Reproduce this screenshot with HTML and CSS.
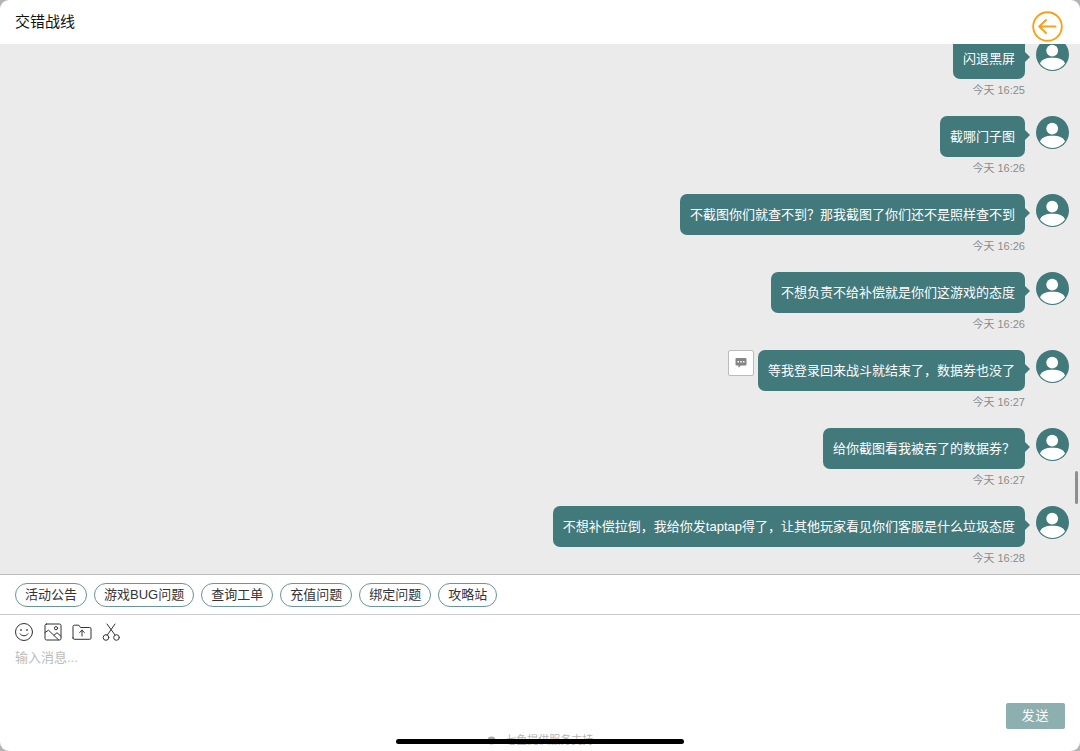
FILE: index.html
```html
<!DOCTYPE html>
<html lang="zh-CN">
<head>
<meta charset="utf-8">
<meta name="viewport" content="width=device-width, initial-scale=1">
<title>交错战线</title>
<link rel="stylesheet" href="styles.css">
</head>
<body>
<svg class="sprite" aria-hidden="true">
  <symbol id="avatar" viewBox="0 0 33 33">
    <circle cx="16.5" cy="16.5" r="16.5" fill="#42797b"/>
    <circle cx="16.2" cy="12.6" r="5.9" fill="#fff"/>
    <path d="M4 25.500C5 21.800 10 19.800 16.500 19.800S28 21.800 29 25.500A15.300 15.300 0 0 1 4 25.500Z" fill="#fff"/>
  </symbol>
</svg>
<div class="app">
  <header class="header">
    <h1 class="title">交错战线</h1>
    <button class="back" type="button" aria-label="返回">
      <svg width="31" height="31" viewBox="0 0 31 31" fill="none" stroke="#f5a21b" stroke-width="1.900" stroke-linecap="round" stroke-linejoin="round"><circle cx="15.500" cy="15.500" r="14.300"/><path d="M23.500 15.500H7.500M14 9 7.200 15.500 14 22"/></svg>
    </button>
  </header>

  <main class="chat">
    <article class="message">
      <div class="body"><p class="bubble">闪退黑屏</p><time class="time">今天 16:25</time></div>
      <svg class="avatar"><use href="#avatar"/></svg>
    </article>
    <article class="message">
      <div class="body"><p class="bubble">截哪门子图</p><time class="time">今天 16:26</time></div>
      <svg class="avatar"><use href="#avatar"/></svg>
    </article>
    <article class="message">
      <div class="body"><p class="bubble">不截图你们就查不到？那我截图了你们还不是照样查不到</p><time class="time">今天 16:26</time></div>
      <svg class="avatar"><use href="#avatar"/></svg>
    </article>
    <article class="message">
      <div class="body"><p class="bubble">不想负责不给补偿就是你们这游戏的态度</p><time class="time">今天 16:26</time></div>
      <svg class="avatar"><use href="#avatar"/></svg>
    </article>
    <article class="message">
      <button class="quote" type="button" aria-label="引用">
        <svg width="12" height="12" viewBox="0 0 12 12"><path d="M1.500 1h9a1 1 0 0 1 1 1v5.500a1 1 0 0 1-1 1H6L3.500 10.800V8.500h-2a1 1 0 0 1-1-1V2a1 1 0 0 1 1-1Z" fill="#858585"/><path d="M2.500 4h1.500v1.500H2.500zM5.300 4h1.500v1.500H5.300zM8 4h1.500v1.500H8z" fill="#fff"/></svg>
      </button>
      <div class="body"><p class="bubble">等我登录回来战斗就结束了，数据券也没了</p><time class="time">今天 16:27</time></div>
      <svg class="avatar"><use href="#avatar"/></svg>
    </article>
    <article class="message">
      <div class="body"><p class="bubble">给你截图看我被吞了的数据券？</p><time class="time">今天 16:27</time></div>
      <svg class="avatar"><use href="#avatar"/></svg>
    </article>
    <article class="message">
      <div class="body"><p class="bubble">不想补偿拉倒，我给你发taptap得了，让其他玩家看见你们客服是什么垃圾态度</p><time class="time">今天 16:28</time></div>
      <svg class="avatar"><use href="#avatar"/></svg>
    </article>
    <span class="scroll-thumb"></span>
  </main>

  <nav class="shortcuts">
    <button class="chip" type="button">活动公告</button>
    <button class="chip" type="button">游戏BUG问题</button>
    <button class="chip" type="button">查询工单</button>
    <button class="chip" type="button">充值问题</button>
    <button class="chip" type="button">绑定问题</button>
    <button class="chip" type="button">攻略站</button>
  </nav>

  <form class="composer">
    <div class="tools">
      <button class="tool" type="button" aria-label="表情">
        <svg class="tool-icon" viewBox="0 0 20 20"><circle cx="10" cy="10" r="8.500"/><path d="M6 11.800c1.800 2.700 6.200 2.700 8 0"/><path d="M7 7.800v.4M13 7.800v.4" stroke-width="1.500"/></svg>
      </button>
      <button class="tool" type="button" aria-label="图片">
        <svg class="tool-icon" viewBox="0 0 20 20"><rect x="2" y="2" width="16" height="16" rx="1.500"/><circle cx="13" cy="6.200" r="1.600"/><path d="M2 10.500 5.500 8.200l10 9.600M11 13.300l3-2.600 4 3.600"/></svg>
      </button>
      <button class="tool" type="button" aria-label="文件">
        <svg class="tool-icon" viewBox="0 0 20 20"><path d="M1 16V4.500A1.300 1.300 0 0 1 2.300 3.200h4.500L8.500 5.500h9.200A1.300 1.300 0 0 1 19 6.800V16a1.300 1.300 0 0 1-1.300 1.300H2.300A1.300 1.300 0 0 1 1 16ZM10 14V8.200M7.600 10.500 10 8.200l2.400 2.300"/></svg>
      </button>
      <button class="tool" type="button" aria-label="截图">
        <svg class="tool-icon" viewBox="0 0 20 20"><circle cx="5" cy="15.500" r="2.800"/><circle cx="15.500" cy="15.500" r="2.800"/><path d="M6.300 13 14 2M14 13 6 2"/></svg>
      </button>
    </div>
    <textarea class="input" aria-label="输入消息" placeholder="输入消息..."></textarea>
    <button class="send" type="submit">发送</button>
    <footer class="support"><svg width="9" height="9" viewBox="0 0 9 9"><circle cx="4.500" cy="4.500" r="4" fill="#aaa"/></svg>· 七鱼提供服务支持</footer>
  </form>
  <div class="home-bar"></div>
</div>
</body>
</html>
```
FILE: styles.css
```css
* {
  box-sizing: border-box;
}

body {
  margin: 0;
  background: #b4b4b4;
  font-family: "Liberation Sans", "Noto Sans CJK SC", sans-serif;
  font-size: 13px;
  line-height: 20px;
  color: #333;
}

button {
  margin: 0;
  padding: 0;
  border: 0;
  background: none;
  font: inherit;
  color: inherit;
}

svg {
  display: block;
}

.sprite {
  position: absolute;
  width: 0;
  height: 0;
}

.app {
  position: relative;
  display: flex;
  flex-direction: column;
  height: 100vh;
  overflow: hidden;
  border-radius: 9px;
  background: #fff;
}

.header {
  display: flex;
  align-items: center;
  flex: none;
  height: 44px;
  padding: 0 15px;
}

.title {
  margin: 0;
  font-size: 15px;
  font-weight: 400;
  color: #111;
}

.back {
  position: absolute;
  top: 11px;
  right: 17px;
  z-index: 1;
}

.chat {
  position: relative;
  display: flex;
  flex: 1;
  flex-direction: column;
  justify-content: flex-end;
  gap: 12px;
  min-height: 0;
  padding: 0 11px 2px;
  overflow: hidden;
  background: #ebebeb;
}

.message {
  display: flex;
  flex: none;
  align-items: flex-start;
  justify-content: flex-end;
}

.body {
  display: flex;
  flex-direction: column;
  align-items: flex-end;
  margin-right: 11px;
}

.bubble {
  position: relative;
  margin: 0;
  padding: 11px 10px 10px;
  border-radius: 7px;
  background: #42797b;
  color: #fff;
}

.bubble::after {
  content: "";
  position: absolute;
  top: 14px;
  left: 100%;
  border: 5px solid transparent;
  border-right-width: 0;
  border-left-color: #42797b;
}

.time {
  height: 25px;
  padding-top: 1px;
  font-size: 11px;
  color: #8c8c8c;
}

.avatar {
  flex: none;
  width: 33px;
  height: 33px;
}

.quote {
  display: grid;
  place-items: center;
  width: 26px;
  height: 26px;
  margin-right: 4px;
  border: 1px solid #bbb;
  border-radius: 2px;
  background: #fff;
}

.scroll-thumb {
  position: absolute;
  right: 2px;
  bottom: 70px;
  width: 3px;
  height: 33px;
  border-radius: 2px;
  background: #8e8e8e;
}

.shortcuts {
  display: flex;
  flex: none;
  gap: 7px;
  padding: 8px 15px 7px;
  border-top: 1px solid #bdbdbd;
  border-bottom: 1px solid #ccc;
}

.chip {
  height: 24px;
  padding: 0 9px;
  border: 1px solid #6a9495;
  border-radius: 12px;
  line-height: 22px;
}

.composer {
  display: flex;
  flex: none;
  flex-direction: column;
  padding: 7px 15px 0;
}

.tools {
  display: flex;
  gap: 9px;
  margin-left: -1px;
}

.tool-icon {
  width: 20px;
  height: 20px;
  fill: none;
  stroke: #333;
  stroke-width: 1;
  stroke-linecap: round;
  stroke-linejoin: round;
}

.input {
  height: 46px;
  margin: 6px 0 9px;
  padding: 0;
  border: 0;
  outline: 0;
  resize: none;
  background: none;
  font: inherit;
  color: #333;
}

.input::placeholder {
  color: #bbb;
}

.send {
  align-self: flex-end;
  width: 59px;
  height: 26px;
  border-radius: 2px;
  background: #8eafb0;
  color: #fff;
  letter-spacing: 1px;
}

.support {
  display: flex;
  align-items: center;
  justify-content: center;
  gap: 3px;
  height: 22px;
  font-size: 11px;
  color: #b5b5b5;
}

.home-bar {
  position: absolute;
  bottom: 7px;
  left: 50%;
  width: 288px;
  height: 5px;
  margin-left: -144px;
  border-radius: 3px;
  background: #000;
}
```
